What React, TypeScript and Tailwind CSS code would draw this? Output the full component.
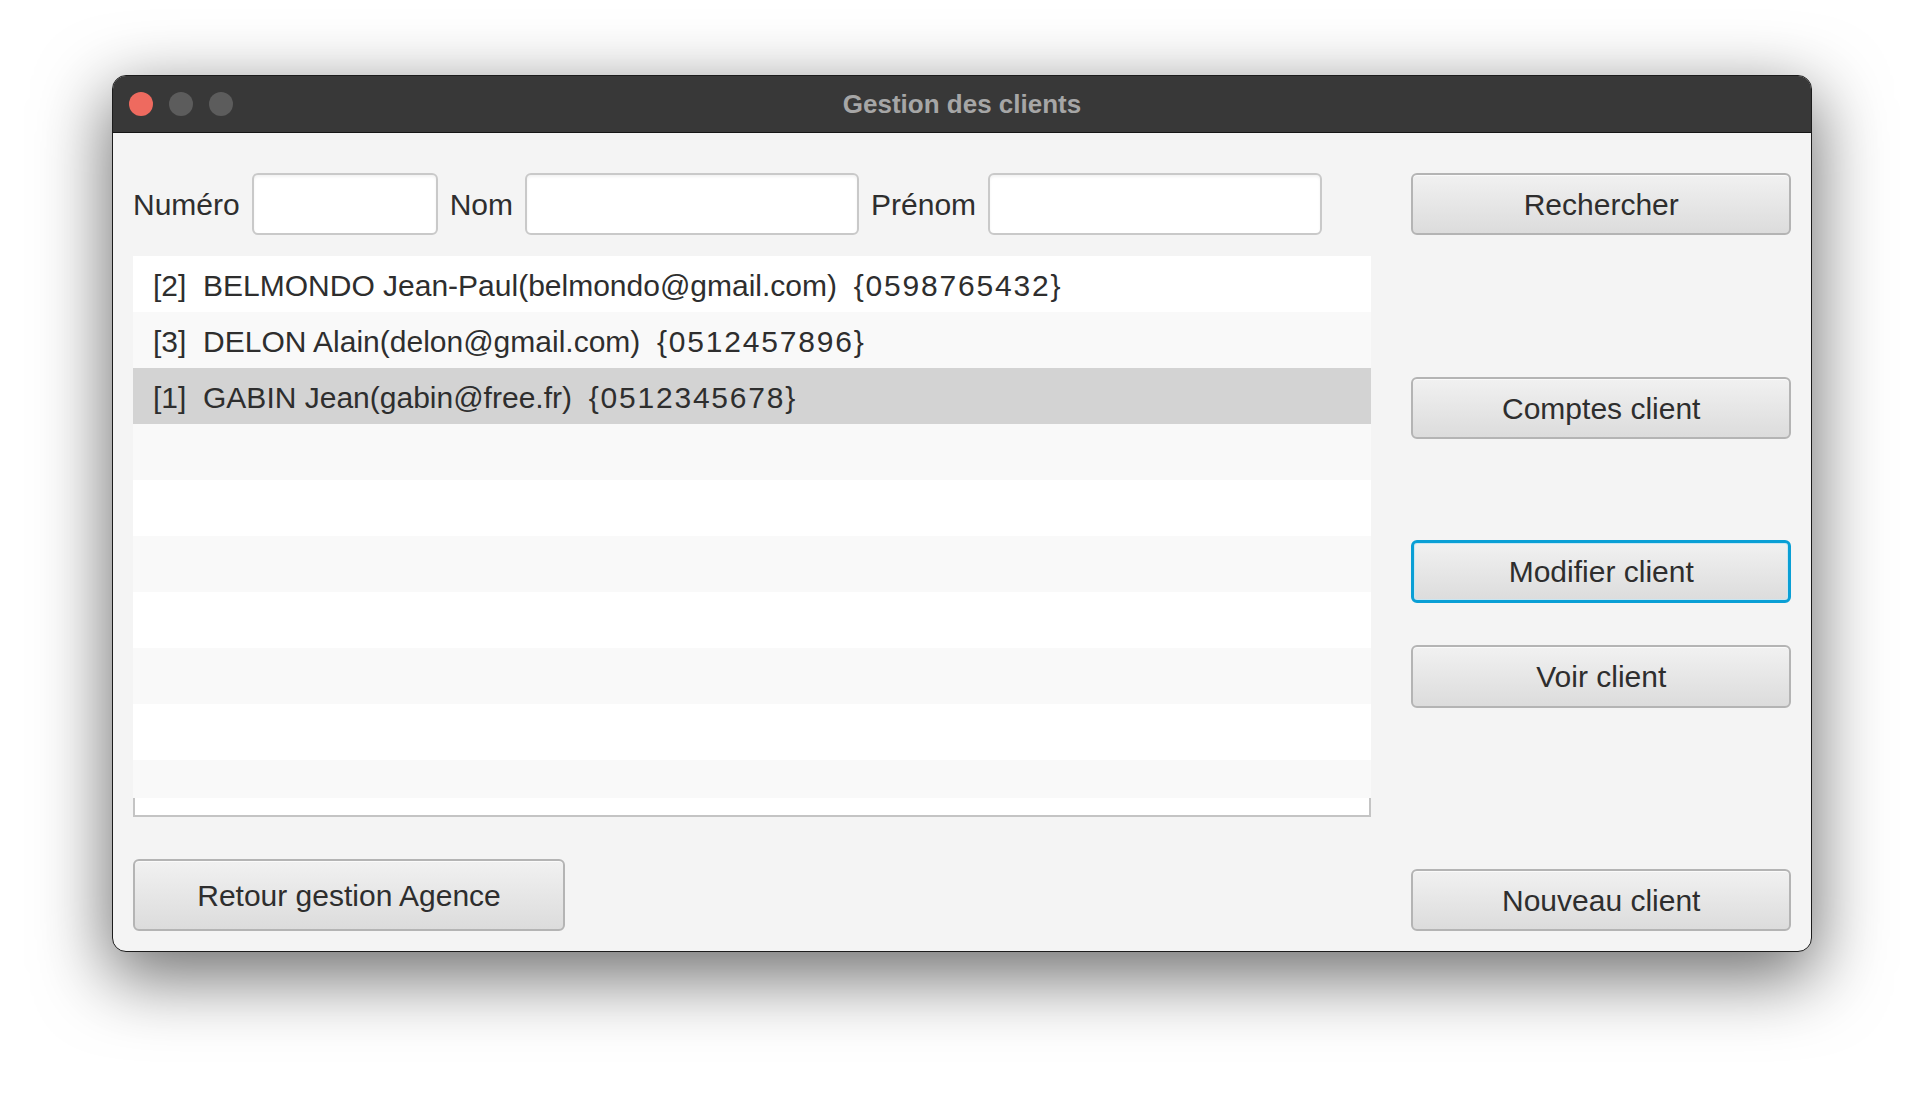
import React from 'react';

const clients = [
  { text: '[2]  BELMONDO Jean-Paul(belmondo@gmail.com)  ', tel: '{0598765432}' },
  { text: '[3]  DELON Alain(delon@gmail.com)  ', tel: '{0512457896}' },
  { text: '[1]  GABIN Jean(gabin@free.fr)  ', tel: '{0512345678}' },
];

const Field: React.FC<{ label: string; width: string }> = ({ label, width }) => (
  <>
    <span className="text-[30px] text-[#2e2e2e]">{label}</span>
    <div
      className={`${width} h-[62px] rounded-[6px] border-2 border-[#c9c9c9] bg-white shadow-[inset_0_2px_3px_rgba(0,0,0,0.05)]`}
    />
  </>
);

const Button: React.FC<{ label: string; focused?: boolean; className?: string }> = ({
  label,
  focused,
  className = '',
}) => (
  <button
    className={`${className} flex items-center justify-center rounded-[6px] bg-gradient-to-b from-[#f1f1f1] to-[#dcdcdc] text-[30px] text-[#2e2e2e] ${
      focused
        ? 'border-[3px] border-[#0a9fd5] shadow-[inset_0_0_0_1px_#c9e6f2]'
        : 'border-2 border-[#b4b4b4] shadow-[inset_0_1px_0_#fafafa]'
    }`}
  >
    {label}
  </button>
);

export default function App() {
  const rows = Array.from({ length: 10 }, (_, i) => i);

  return (
    <div className="min-h-[1100px] bg-white pt-[75px] font-['Liberation_Sans',Arial,sans-serif]">
      <div className="mx-auto w-[1700px] h-[877px] flex flex-col overflow-hidden rounded-[14px] border border-[#1c1c1c] bg-[#f4f4f4] shadow-[0_22px_70px_4px_rgba(0,0,0,0.56)]">
        {/* title bar */}
        <div className="relative h-[57px] flex items-center border-b border-[#151515] bg-[#383838] px-[16px]">
          <div className="flex gap-[16px]">
            <span className="w-[24px] h-[24px] rounded-full bg-[#ee6a5f]" />
            <span className="w-[24px] h-[24px] rounded-full bg-[#5c5c5c]" />
            <span className="w-[24px] h-[24px] rounded-full bg-[#5c5c5c]" />
          </div>
          <div className="absolute inset-0 flex items-center justify-center text-[26px] font-bold text-[#a6a6a6]">
            Gestion des clients
          </div>
        </div>

        {/* content */}
        <div className="flex-1 flex gap-[40px] pl-[20px] pr-[20px] pt-[40px] pb-[20px]">
          <div className="w-[1240px] flex flex-col">
            <div className="flex items-center gap-[12px] h-[62px]">
              <Field label="Numéro" width="w-[186px]" />
              <Field label="Nom" width="w-[334px]" />
              <Field label="Prénom" width="w-[334px]" />
            </div>

            <div className="mt-[21px] flex flex-col">
              <div className="h-[542px] overflow-hidden">
                {rows.map((i) => (
                  <div
                    key={i}
                    className={`h-[56px] flex items-center pl-[20px] pt-[3px] whitespace-pre text-[30px] text-[#2e2e2e] ${
                      i === 2 ? 'bg-[#d3d3d3]' : i % 2 === 1 ? 'bg-[#f9f9f9]' : 'bg-white'
                    }`}
                  >
                    {clients[i] && (
                      <>
                        <span>{clients[i].text}</span>
                        <span className="tracking-[1.8px]">{clients[i].tel}</span>
                      </>
                    )}
                  </div>
                ))}
              </div>
              <div className="h-[19px] bg-white border-x-2 border-b-2 border-[#c4c4c4]" />
            </div>

            <Button label="Retour gestion Agence" className="mt-[42px] w-[432px] h-[72px]" />
          </div>

          <div className="w-[380px] flex flex-col">
            <Button label="Rechercher" className="h-[62px]" />
            <Button label="Comptes client" className="mt-[142px] h-[62px]" />
            <Button label="Modifier client" focused className="mt-[101px] h-[63px]" />
            <Button label="Voir client" className="mt-[42px] h-[63px]" />
            <div className="flex-1" />
            <Button label="Nouveau client" className="h-[62px]" />
          </div>
        </div>
      </div>
    </div>
  );
}
